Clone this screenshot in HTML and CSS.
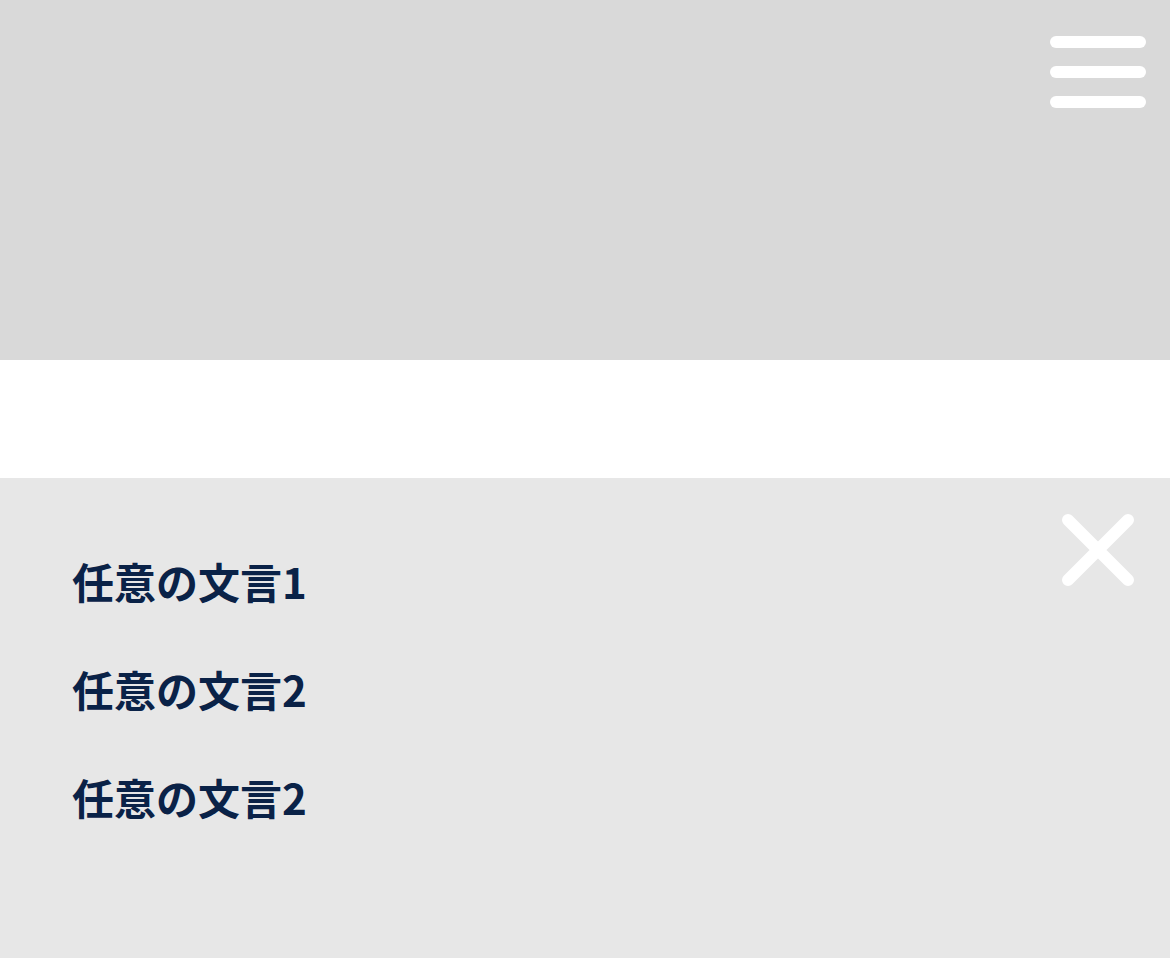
FILE: index.html
```html
<!DOCTYPE html>
<html lang="ja">
<head>
<meta charset="utf-8">
<title>Menu</title>
<link rel="stylesheet" href="styles.css">
</head>
<body>
<header class="hero">
  <button class="hamburger" aria-label="メニュー">
    <span class="bar"></span>
    <span class="bar"></span>
    <span class="bar"></span>
  </button>
</header>
<div class="spacer"></div>
<nav class="menu">
  <button class="close" aria-label="閉じる">
    <svg width="72" height="72" viewBox="0 0 72 72">
      <path d="M6 6 L66 66 M66 6 L6 66" stroke="#ffffff" stroke-width="12" stroke-linecap="round" fill="none"/>
    </svg>
  </button>
  <ul class="menu-list">
    <li class="menu-item">任意の文言1</li>
    <li class="menu-item">任意の文言2</li>
    <li class="menu-item">任意の文言2</li>
  </ul>
</nav>
</body>
</html>
```
FILE: styles.css
```css
* { box-sizing: border-box; }
html, body { margin: 0; padding: 0; }
body {
  width: 1170px;
  height: 958px;
  overflow: hidden;
  background: #ffffff;
  font-family: "Noto Sans CJK JP", "Noto Sans", sans-serif;
}
.hero {
  height: 360px;
  background: #d9d9d9;
  display: flex;
  justify-content: flex-end;
  align-items: flex-start;
  padding: 36px 24px 0 0;
}
.hamburger {
  width: 96px;
  display: flex;
  flex-direction: column;
  gap: 18px;
  padding: 0;
  border: 0;
  background: none;
}
.bar {
  display: block;
  width: 96px;
  height: 12px;
  border-radius: 6px;
  background: #ffffff;
}
.spacer { height: 118px; }
.menu {
  position: relative;
  height: 480px;
  background: #e7e7e7;
  padding: 71px 0 0 72px;
}
.close {
  position: absolute;
  top: 36px;
  right: 36px;
  width: 72px;
  height: 72px;
  padding: 0;
  border: 0;
  background: none;
}
.close svg { display: block; }
.menu-list {
  list-style: none;
  margin: 0;
  padding: 0;
  display: flex;
  flex-direction: column;
  gap: 45px;
}
.menu-item {
  font-size: 42px;
  line-height: 63px;
  font-weight: 700;
  color: #0a2247;
}
```
